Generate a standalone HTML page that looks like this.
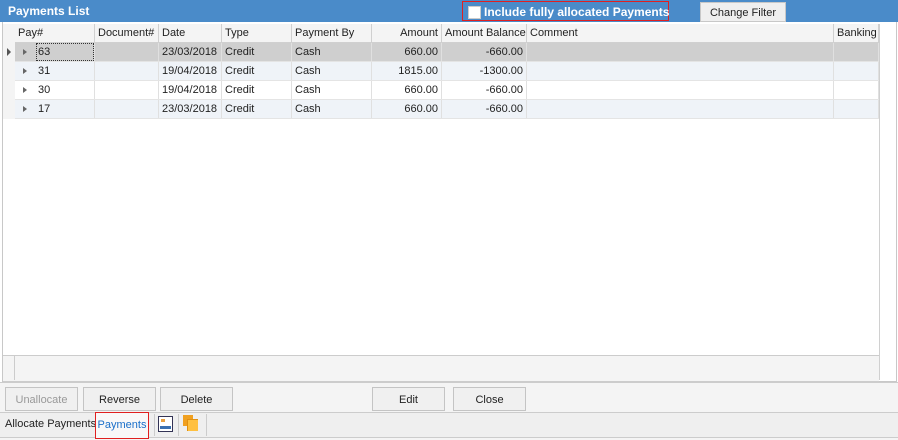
<!DOCTYPE html><html><head><style>
body{margin:0;width:898px;height:439px;background:#fff;font-family:"Liberation Sans",sans-serif;font-size:11px;color:#222;position:relative;overflow:hidden}
.a{position:absolute}
.title{left:0;top:0;width:898px;height:22px;background:#4a8bc9;color:#fff;font-weight:bold;font-size:12px}
.cell{position:absolute;height:18px;line-height:19px;white-space:nowrap;box-sizing:border-box;padding:0 3px;border-right:1px solid #e0e0e0}
.hd{background:#f4f4f4;border-right:1px solid #d0d0d0;border-bottom:1px solid #d0d0d0;height:19px;line-height:19px}
.r{text-align:right}
.btn{position:absolute;top:387px;height:24px;line-height:24px;text-align:center;background:#f0f0f0;border:1px solid #c4c4c4;box-sizing:border-box;font-size:11px}
</style></head><body>
<div class="a title"><span class="a" style="left:8px;top:4px">Payments List</span>
<div class="a" style="left:462px;top:1px;width:207px;height:20px;border:1px solid #e02020;box-sizing:border-box"></div>
<div class="a" style="left:468px;top:6px;width:11px;height:11px;background:#fff;border:1px solid #ccc"></div>
<span class="a" style="left:484px;top:5px">Include fully allocated Payments</span>
<div class="a" style="left:700px;top:2px;width:86px;height:20px;background:#efefef;color:#222;font-weight:normal;font-size:11px;text-align:center;line-height:20px;border:1px solid #c8c8c8;box-sizing:border-box">Change Filter</div>
</div>
<div class="a" style="left:2px;top:22px;width:895px;height:360px;border:1px solid #c8c8c8;border-top:0;box-sizing:border-box"></div>
<div class="a" style="left:3px;top:24px;width:12px;height:95px;background:#f4f4f4;border-right:1px solid #d0d0d0"></div>
<div class="a" style="left:3px;top:355px;width:876px;height:25px;background:#f4f4f4;border-top:1px solid #ccc;border-bottom:1px solid #ccc"></div>
<div class="a" style="left:14px;top:356px;width:1px;height:24px;background:#ccc"></div>
<div class="a" style="left:879px;top:24px;width:1px;height:356px;background:#d0d0d0"></div>
<div id="g"></div>
<script>
var cols=[[15,80,'Pay#',0],[95,64,'Document#',0],[159,63,'Date',0],[222,70,'Type',0],[292,80,'Payment By',0],[372,70,'Amount',1],[442,85,'Amount Balance',1],[527,307,'Comment',0],[834,45,'Banking',0]];
var rows=[['63','','23/03/2018','Credit','Cash','660.00','-660.00','',''],['31','','19/04/2018','Credit','Cash','1815.00','-1300.00','',''],['30','','19/04/2018','Credit','Cash','660.00','-660.00','',''],['17','','23/03/2018','Credit','Cash','660.00','-660.00','','']];
var h='';cols.forEach(function(c){h+='<div class="cell hd'+(c[3]?' r':'')+'" style="left:'+c[0]+'px;top:24px;width:'+c[1]+'px">'+c[2]+'</div>'});
rows.forEach(function(r,i){var t=43+i*19;var bg=i==0?'#cfcfcf':(i%2?'#eff3f8':'#fff');
h+='<div class="a" style="left:15px;top:'+t+'px;width:864px;height:19px;background:'+bg+';border-bottom:1px solid #e4e4e4;box-sizing:border-box"></div>';
h+='<div class="a" style="left:23px;top:'+(t+6)+'px;width:0;height:0;border-left:4px solid #666;border-top:3px solid transparent;border-bottom:3px solid transparent"></div>';
cols.forEach(function(c,j){var v=r[j];var l=c[0],w=c[1];if(j==0){l=35;w=60}h+='<div class="cell'+(c[3]?' r':'')+'" style="left:'+l+'px;top:'+t+'px;width:'+w+'px">'+v+'</div>'})});
h+='<div class="a" style="left:7px;top:48px;width:0;height:0;border-left:4px solid #555;border-top:4px solid transparent;border-bottom:4px solid transparent"></div>';
h+='<div class="a" style="left:36px;top:43px;width:58px;height:18px;border:1px dotted #333;box-sizing:border-box"></div>';
document.getElementById('g').innerHTML=h;
</script>
<div class="a" style="left:0;top:382px;width:898px;height:57px;background:#f4f4f4;border-top:1px solid #ccc"></div>
<div class="btn" style="left:5px;width:73px;color:#999">Unallocate</div>
<div class="btn" style="left:83px;width:73px">Reverse</div>
<div class="btn" style="left:160px;width:73px">Delete</div>
<div class="btn" style="left:372px;width:73px">Edit</div>
<div class="btn" style="left:453px;width:73px">Close</div>
<div class="a" style="left:0;top:412px;width:898px;height:24px;background:#efefef;border-top:1px solid #ccc;border-bottom:1px solid #ccc"></div>
<span class="a" style="left:5px;top:418px">Allocate Payments</span>
<div class="a" style="left:95px;top:412px;width:52px;height:25px;border:1px solid #e02020;background:#f8f8f8;color:#1a6fc9;line-height:24px;text-align:center">Payments</div>
<div class="a" style="left:154px;top:414px;width:1px;height:22px;background:#ccc"></div>
<div class="a" style="left:158px;top:416px;width:13px;height:14px;border:1px solid #335;background:#fff"><div class="a" style="left:2px;top:2px;width:4px;height:3px;background:#e9a040"></div><div class="a" style="left:1px;top:9px;width:11px;height:3px;background:#3a6fb0"></div></div>
<div class="a" style="left:178px;top:414px;width:1px;height:22px;background:#ccc"></div>
<div class="a" style="left:183px;top:415px;width:10px;height:11px;background:#f0a020"></div>
<div class="a" style="left:187px;top:419px;width:10px;height:11px;background:#ffc040;border-left:1px solid #e09010;border-top:1px solid #e09010"></div>
<div class="a" style="left:206px;top:414px;width:1px;height:22px;background:#ccc"></div>
</body></html>
